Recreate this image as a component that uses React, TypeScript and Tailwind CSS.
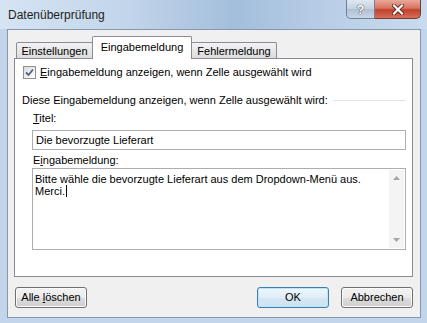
import React from "react";

function Checkbox() {
  return (
    <div className="w-[13px] h-[13px] border border-[#8f8f8f] bg-[linear-gradient(135deg,#dcdcdc,#ffffff)] p-[1px] flex-none">
      <svg width="9" height="9" viewBox="0 0 9 9" className="block">
        <path d="M1 4.5 L3.5 7 L8 1.5" fill="none" stroke="#4d6185" strokeWidth="1.8" />
      </svg>
    </div>
  );
}

function TitleButtons() {
  return (
    <div className="flex items-start mr-[6px]">
      <div className="w-[29px] h-[19px] rounded-bl-[5px] border border-[#6e7f99] border-t-0 bg-[linear-gradient(180deg,#dfe7f1,#c3d0e0_50%,#aebfd6_50%,#c9d6e6)] flex items-center justify-center">
        <span className="text-[13px] font-bold leading-none text-white [text-shadow:0_0_1px_#333,0_0_1px_#333]">?</span>
      </div>
      <div className="w-[46px] h-[19px] rounded-br-[5px] border border-[#7a3a30] border-t-0 border-l-0 bg-[linear-gradient(180deg,#e9a99b,#d7735f_45%,#c2412a_55%,#d5705a)] flex items-center justify-center">
        <svg width="12" height="11" viewBox="0 0 12 11">
          <path d="M2 1.5 L10 9.5 M10 1.5 L2 9.5" stroke="#4a1a12" strokeWidth="3.8" strokeLinecap="square" />
          <path d="M2 1.5 L10 9.5 M10 1.5 L2 9.5" stroke="#ffffff" strokeWidth="2.2" strokeLinecap="square" />
        </svg>
      </div>
    </div>
  );
}

function Btn({ children, def }: { children: React.ReactNode; def?: boolean }) {
  return (
    <div
      className={
        "w-[72px] h-[21px] rounded-[3px] border flex items-center justify-center text-black " +
        (def
          ? "border-[#3c7fb1] bg-[linear-gradient(180deg,#eef6fb,#e1eef7_50%,#d3e6f3_50%,#cfe3f0)] shadow-[inset_0_0_0_1px_#bfe3f7]"
          : "border-[#707070] bg-[linear-gradient(180deg,#f2f2f2,#ebebeb_50%,#dddddd_50%,#cfcfcf)] shadow-[inset_0_0_0_1px_#fbfbfb]")
      }
    >
      <span>{children}</span>
    </div>
  );
}

export default function App() {
  return (
    <div className="w-[427px] h-[323px] flex flex-col overflow-hidden bg-[#c2d5eb] text-[11px] leading-[13px] text-black font-['Liberation_Sans',Arial,sans-serif]">
      {/* Title bar */}
      <div className="h-[29px] flex justify-between bg-[linear-gradient(90deg,#d6e4f3,#c2d5ea_30%,#a3bedc_55%,#b7cde6_75%,#c9dbee)]">
        <div className="pl-[8px] pt-[8px] text-[12px] leading-[14px] text-[#1e1e1e]">Datenüberprüfung</div>
        <TitleButtons />
      </div>

      {/* Client area */}
      <div className="ml-[7px] mr-[6px] mb-[5px] flex-1 border border-[#8797ad] bg-[#f0f0f0] flex flex-col pl-[6px] pr-[7px] pt-[6px]">
        {/* Tabs */}
        <div className="h-[22px] flex items-end ml-[2px] relative z-10">
          <div className="w-[77px] h-[16px] border border-b-0 border-[#898c95] rounded-t-[2px] bg-[linear-gradient(180deg,#f3f3f3,#e8e8e8_50%,#dcdcdc)] flex items-center justify-center pt-[1px]">
            Einstellungen
          </div>
          <div className="w-[100px] h-[23px] -mb-px -ml-px border border-b-0 border-[#898c95] rounded-t-[2px] bg-white flex items-start justify-center pt-[4px]">
            Eingabemeldung
          </div>
          <div className="w-[86px] h-[16px] -ml-px border border-b-0 border-[#898c95] rounded-t-[2px] bg-[linear-gradient(180deg,#f3f3f3,#e8e8e8_50%,#dcdcdc)] flex items-center justify-center pt-[1px]">
            Fehlermeldung
          </div>
        </div>

        {/* Panel */}
        <div className="h-[219px] border border-[#898c95] bg-white flex flex-col">
          <div className="mt-[7px] pl-[8px] flex items-center gap-[4px] h-[13px]">
            <Checkbox />
            <span>
              <span className="underline">E</span>ingabemeldung anzeigen, wenn Zelle ausgewählt wird
            </span>
          </div>

          <div className="mt-[15px] pl-[7px] pr-[6px] flex items-center h-[13px]">
            <span className="whitespace-nowrap">Diese Eingabemeldung anzeigen, wenn Zelle ausgewählt wird:</span>
            <div className="flex-1 h-px bg-[#dde3e8] ml-[5px]" />
          </div>

          <div className="mt-[5px] pl-[18px] h-[13px]">
            <span className="underline">T</span>itel:
          </div>

          <div className="mt-[5px] ml-[17px] mr-[6px] h-[20px] border border-[#abadb3] flex items-center pl-[3px]">
            Die bevorzugte Lieferart
          </div>

          <div className="mt-[4px] pl-[18px] h-[13px]">
            E<span className="underline">i</span>ngabemeldung:
          </div>

          <div className="mt-px ml-[17px] mr-[6px] h-[82px] border border-[#abadb3] flex">
            <div className="flex-1 pl-[2px] pt-[4px] leading-[12px]">
              <div>Bitte wähle die bevorzugte Lieferart aus dem Dropdown-Menü aus.</div>
              <div className="flex items-center">
                <span>Merci.</span>
                <span className="inline-block w-px h-[12px] bg-black ml-px" />
              </div>
            </div>
            <div className="w-[15px] my-px mr-px bg-[#f4f4f4] flex flex-col justify-between items-center py-[6px]">
              <svg width="7" height="4" viewBox="0 0 7 4">
                <path d="M0 4 L3.5 0 L7 4 Z" fill="#a5a5a5" />
              </svg>
              <svg width="7" height="4" viewBox="0 0 7 4">
                <path d="M0 0 L3.5 4 L7 0 Z" fill="#a5a5a5" />
              </svg>
            </div>
          </div>
        </div>

        {/* Buttons */}
        <div className="mt-[10px] flex items-center pl-px">
          <Btn>
            Alle <span className="underline">l</span>öschen
          </Btn>
          <div className="flex-1" />
          <Btn def>OK</Btn>
          <div className="w-[12px]" />
          <Btn>Abbrechen</Btn>
        </div>
      </div>
    </div>
  );
}
